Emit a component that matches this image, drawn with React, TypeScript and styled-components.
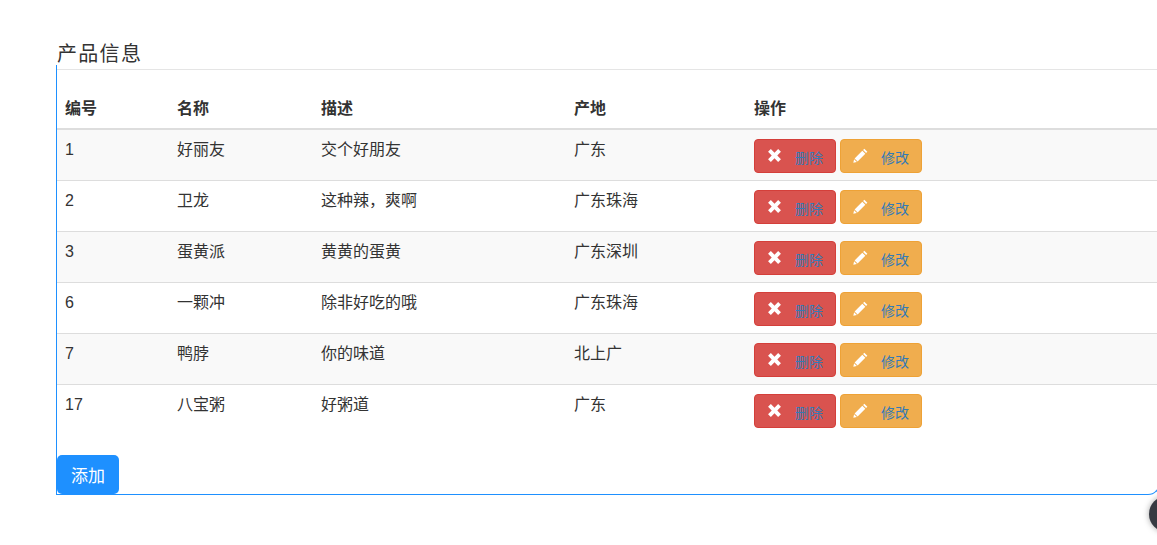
import React from "react";
import styled, { createGlobalStyle } from "styled-components";

const GlobalStyle = createGlobalStyle`
  html, body {
    margin: 0;
    height: 100%;
    overflow: hidden;
    background: #fff;
  }
  body {
    font-family: "Liberation Sans", "Noto Sans CJK SC", sans-serif;
    font-size: 16px;
    line-height: 1.42857;
    color: #333;
  }
`;

const products = [
  { id: 1, name: "好丽友", desc: "交个好朋友", origin: "广东" },
  { id: 2, name: "卫龙", desc: "这种辣，爽啊", origin: "广东珠海" },
  { id: 3, name: "蛋黄派", desc: "黄黄的蛋黄", origin: "广东深圳" },
  { id: 6, name: "一颗冲", desc: "除非好吃的哦", origin: "广东珠海" },
  { id: 7, name: "鸭脖", desc: "你的味道", origin: "北上广" },
  { id: 17, name: "八宝粥", desc: "好粥道", origin: "广东" },
];

export default function App() {
  return (
    <Page>
      <GlobalStyle />
      <Title>产品信息</Title>
      <Panel>
        <Divider />
        <Table>
          <thead>
            <tr>
              <HeadCell $width={112}>编号</HeadCell>
              <HeadCell $width={144}>名称</HeadCell>
              <HeadCell $width={253}>描述</HeadCell>
              <HeadCell $width={180}>产地</HeadCell>
              <HeadCell>操作</HeadCell>
            </tr>
          </thead>
          <tbody>
            {products.map((item) => (
              <Row key={item.id}>
                <Cell>{item.id}</Cell>
                <Cell>{item.name}</Cell>
                <Cell>{item.desc}</Cell>
                <Cell>{item.origin}</Cell>
                <Cell>
                  <ActionButton $variant="danger">
                    <RemoveIcon />
                    <ActionLabel>删除</ActionLabel>
                  </ActionButton>
                  <ActionButton $variant="warning">
                    <PencilIcon />
                    <ActionLabel>修改</ActionLabel>
                  </ActionButton>
                </Cell>
              </Row>
            ))}
          </tbody>
        </Table>
        <AddButton>添加</AddButton>
      </Panel>
      <FloatingDot />
    </Page>
  );
}

function RemoveIcon() {
  return (
    <IconSvg viewBox="0 0 14 14">
      <path
        d="M1 3.6 3.6 1 7 4.4 10.4 1 13 3.6 9.6 7 13 10.4 10.4 13 7 9.6 3.6 13 1 10.4 4.4 7 1 3.6Z"
        fill="#fff"
      />
    </IconSvg>
  );
}

function PencilIcon() {
  return (
    <IconSvg viewBox="0 0 14 14">
      <path
        d="M10.6 0.6 13.4 3.4 12.2 4.6 9.4 1.8 10.6 0.6ZM8.7 2.5 11.5 5.3 4.3 12.5 1.5 9.7 8.7 2.5ZM1 10.4 3.6 13 0.3 13.7 1 10.4Z"
        fill="#fff"
      />
    </IconSvg>
  );
}

const Page = styled.div`
  padding: 42px 0 0 56px;
`;

const Title = styled.h3`
  margin: 0;
  padding-left: 1px;
  height: 23px;
  font-size: 20px;
  font-weight: 400;
  line-height: 25px;
  letter-spacing: 1.3px;
`;

const Panel = styled.div`
  box-sizing: border-box;
  width: 1104px;
  height: 430px;
  padding-top: 4px;
  border: 1px solid #1e90ff;
  border-top: none;
  border-radius: 0 0 12px 0;
`;

const Divider = styled.div`
  border-top: 1px solid #e5e5e5;
`;

const Table = styled.table`
  width: 100%;
  margin: 21px 0 20px;
  table-layout: fixed;
  border-collapse: collapse;
  border-spacing: 0;
`;

const HeadCell = styled.th<{ $width?: number }>`
  box-sizing: border-box;
  width: ${(p) => (p.$width ? `${p.$width}px` : "auto")};
  padding: 7px 8px;
  border-bottom: 2px solid #ddd;
  text-align: left;
  vertical-align: bottom;
  font-weight: 700;
`;

const Row = styled.tr`
  &:nth-child(odd) {
    background: #f9f9f9;
  }
  &:last-child td {
    border-bottom: none;
  }
`;

const Cell = styled.td`
  padding: 9px 8px 7px;
  border-bottom: 1px solid #ddd;
  vertical-align: top;
  font-size: 16px;
`;

const ActionButton = styled.span<{ $variant: "danger" | "warning" }>`
  display: inline-flex;
  align-items: center;
  box-sizing: border-box;
  width: 82px;
  height: 34px;
  margin-right: 4px;
  padding-left: 12px;
  vertical-align: top;
  border-radius: 4px;
  border: 1px solid ${(p) => (p.$variant === "danger" ? "#d43f3a" : "#eea236")};
  background: ${(p) => (p.$variant === "danger" ? "#d9534f" : "#f0ad4e")};
`;

const IconSvg = styled.svg`
  flex: none;
  width: 15px;
  height: 15px;
  margin-bottom: 1px;
`;

const ActionLabel = styled.a`
  margin: 4px 0 0 13px;
  font-size: 14px;
  line-height: 20px;
  color: #337ab7;
`;

const AddButton = styled.button`
  display: block;
  width: 62px;
  height: 39px;
  padding: 0;
  border: none;
  border-radius: 5px;
  background: #1e90ff;
  color: #fff;
  font-family: inherit;
  font-size: 17px;
`;

const FloatingDot = styled.div`
  position: fixed;
  left: 1149px;
  top: 496px;
  width: 36px;
  height: 36px;
  border-radius: 50%;
  background: #373a42;
  box-shadow: 0 0 6px rgba(0, 0, 0, 0.35);
`;
